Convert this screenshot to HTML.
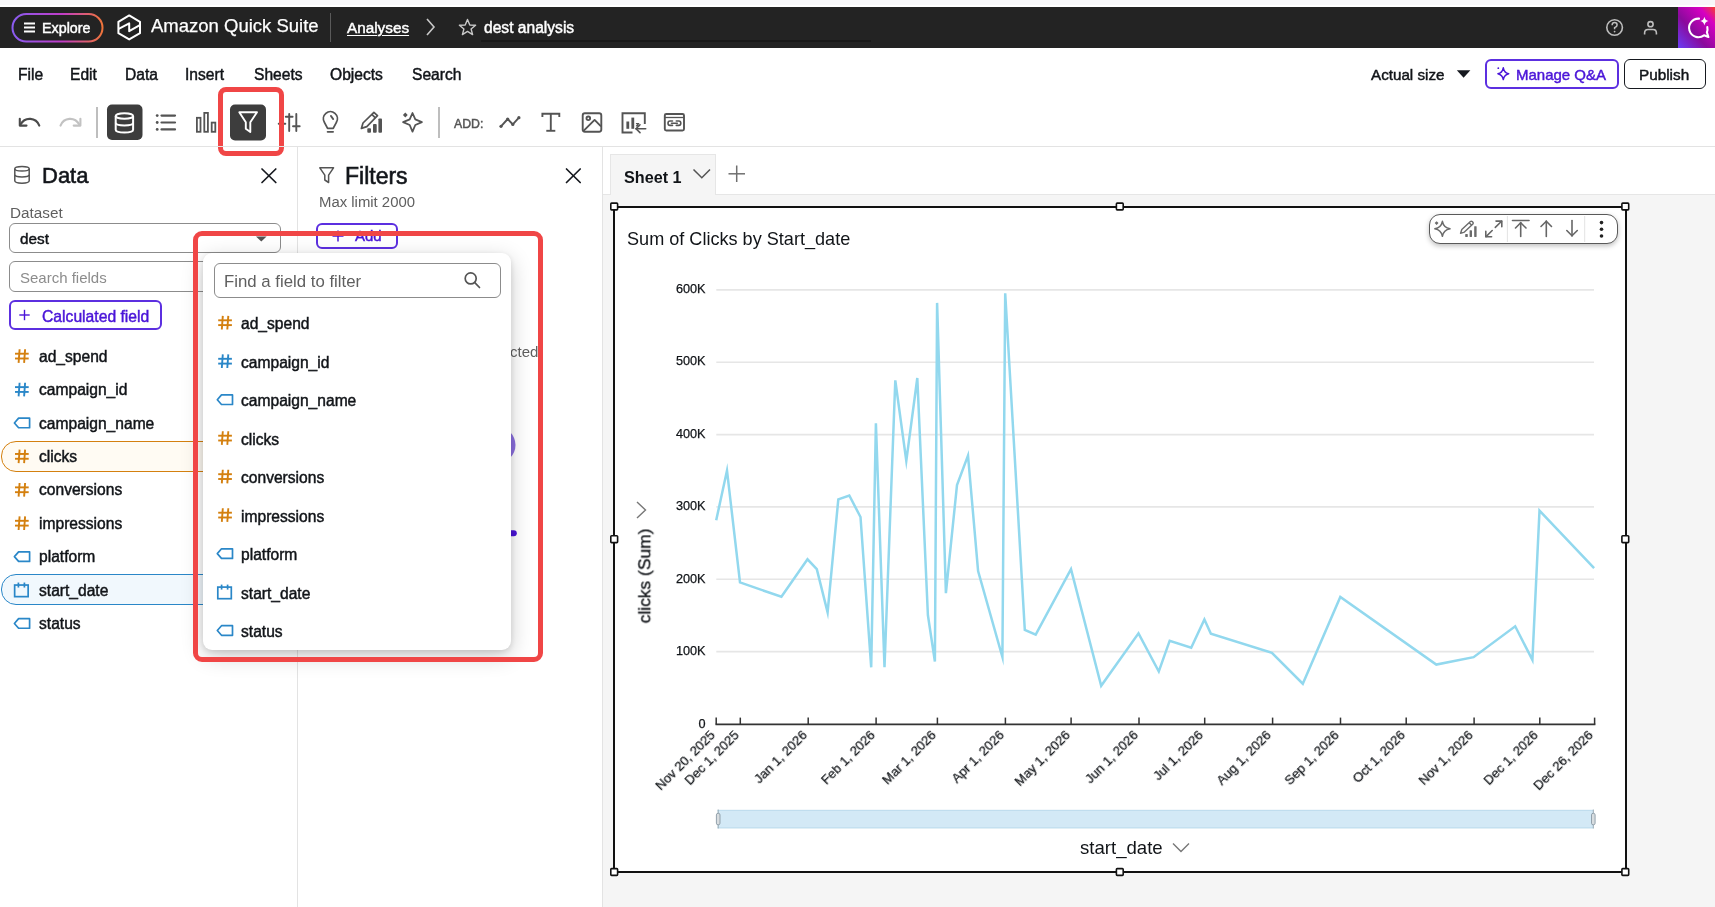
<!DOCTYPE html>
<html><head><meta charset="utf-8">
<style>
*{box-sizing:border-box}
html,body{margin:0;padding:0;width:1715px;height:907px;overflow:hidden;background:#fff;font-family:"Liberation Sans",sans-serif;color:#111418}
.a{position:absolute}
.t{position:absolute;white-space:nowrap;line-height:1;will-change:transform}
.xl{-webkit-text-stroke:0.25px #111418;font-size:13.1px;transform-origin:100% 0;transform:translate(-100%,0) rotate(-45deg)}
.med{-webkit-text-stroke:0.45px currentColor}
svg{position:absolute;overflow:visible}
</style></head><body>
<!-- top strip -->
<div class="a" style="left:0;top:0;width:1715px;height:5px;background:#f8f8fa"></div>
<!-- dark top bar -->
<div class="a" id="topbar" style="left:0;top:7px;width:1715px;height:41px;background:#232323"></div>
<svg style="left:0;top:0" width="1715" height="50">
  <defs>
    <linearGradient id="exg" x1="0" y1="0" x2="1" y2="0">
      <stop offset="0" stop-color="#8a5cf0"/>
      <stop offset="0.55" stop-color="#c03cc8"/>
      <stop offset="1" stop-color="#f0743a"/>
    </linearGradient>
    <linearGradient id="qg" x1="0" y1="1" x2="1" y2="0">
      <stop offset="0" stop-color="#6a3df5"/>
      <stop offset="0.4" stop-color="#8a0a9c"/>
      <stop offset="0.78" stop-color="#d600c2"/>
      <stop offset="1" stop-color="#f5402e"/>
    </linearGradient>
  </defs>
  <rect x="12.5" y="14" width="90" height="27.5" rx="13.75" fill="none" stroke="url(#exg)" stroke-width="2"/>
  <g stroke="#fff" stroke-width="2">
    <line x1="24" y1="23.5" x2="35" y2="23.5"/><line x1="24" y1="27.5" x2="35" y2="27.5"/><line x1="24" y1="31.5" x2="35" y2="31.5"/>
  </g>
  <!-- logo hexagon -->
  <g fill="none" stroke="#fff" stroke-width="2" stroke-linejoin="round">
    <path d="M129.2 15.4 L140 21.8 L140 33.2 L129.2 39.4 L118.4 33.2 L118.4 21.8 Z"/>
    <path d="M118.7 28.9 L129.2 23.4 L129.2 31.2 L139.8 25.1"/>
  </g>
  <line x1="330.5" y1="13" x2="330.5" y2="42" stroke="#5a5a5a" stroke-width="1"/>
  <path d="M427 19 L434 27 L427 35" fill="none" stroke="#c8c8c8" stroke-width="1.6"/>
  <path d="M467.5 19.5 L469.8 25 L475.6 25.3 L471.1 29 L472.6 34.6 L467.5 31.4 L462.4 34.6 L463.9 29 L459.4 25.3 L465.2 25 Z" fill="none" stroke="#c8c8c8" stroke-width="1.4" stroke-linejoin="round"/>
  <line x1="481" y1="41" x2="871" y2="41" stroke="#111" stroke-width="1"/>
  <!-- help -->
  <circle cx="1614.6" cy="27.5" r="7.8" fill="none" stroke="#bdbdbd" stroke-width="1.6"/>
  <path d="M1612.1 25.3 Q1612.1 22.6 1614.6 22.6 Q1617.1 22.6 1617.1 25 Q1617.1 26.6 1614.6 27.6 L1614.6 29.2" fill="none" stroke="#bdbdbd" stroke-width="1.5"/>
  <circle cx="1614.6" cy="31.6" r="0.9" fill="#bdbdbd"/>
  <!-- user -->
  <circle cx="1650.5" cy="24.2" r="2.6" fill="none" stroke="#bdbdbd" stroke-width="1.6"/>
  <path d="M1644.6 34.6 L1644.6 33 Q1644.6 29.5 1648 29.5 L1653 29.5 Q1656.4 29.5 1656.4 33 L1656.4 34.6" fill="none" stroke="#bdbdbd" stroke-width="1.6"/>
  <!-- quick chat gradient -->
  <rect x="1678" y="7" width="37" height="41" fill="url(#qg)"/>
  <path d="M1699 18.6 A9.3 9.3 0 1 0 1704 35.3 L1708.4 37 L1706.9 32.4 A9.3 9.3 0 0 0 1707.3 27" fill="none" stroke="#fff" stroke-width="2.1" stroke-linejoin="round" stroke-linecap="round"/>
  <path d="M1704.4 16.8 Q1705 20.4 1708.6 21.1 Q1705 21.8 1704.4 25.4 Q1703.8 21.8 1700.2 21.1 Q1703.8 20.4 1704.4 16.8 Z" fill="#fff"/>
</svg>
<div class="t med" style="left:41.5px;top:20.5px;font-size:14.3px;color:#fff">Explore</div>
<div class="t" style="left:151px;top:17.3px;font-size:18.5px;color:#fff;-webkit-text-stroke:0.25px #fff">Amazon Quick Suite</div>
<div class="t med" style="left:346.5px;top:20px;font-size:15.3px;color:#fff;text-decoration:underline;text-underline-offset:2px;text-decoration-thickness:1px">Analyses</div>
<div class="t med" style="left:483.5px;top:20px;font-size:15.6px;color:#fff">dest analysis</div>

<!-- menu bar -->
<div class="t med" style="left:17.5px;top:66.5px;font-size:15.6px">File</div>
<div class="t med" style="left:69.7px;top:66.5px;font-size:15.6px">Edit</div>
<div class="t med" style="left:124.5px;top:66.5px;font-size:15.6px">Data</div>
<div class="t med" style="left:185px;top:66.5px;font-size:15.6px">Insert</div>
<div class="t med" style="left:254px;top:66.5px;font-size:15.6px">Sheets</div>
<div class="t med" style="left:330px;top:66.5px;font-size:15.6px">Objects</div>
<div class="t med" style="left:412px;top:66.5px;font-size:15.6px">Search</div>
<div class="t med" style="left:1371.4px;top:66.5px;font-size:15.2px">Actual size</div>
<svg style="left:0;top:0" width="1715" height="100"><path d="M1456.8 70.3 L1470.4 70.3 L1463.6 77.8 Z" fill="#16191f"/></svg>
<div class="a" style="left:1484.5px;top:59px;width:134px;height:29.5px;border:2px solid #5c2fe0;border-radius:6px"></div>
<svg style="left:0;top:0" width="1715" height="100"><path d="M1503.3 67.8 Q1504.2 72.8 1508.7 73.7 Q1504.2 74.6 1503.3 79.6 Q1502.4 74.6 1497.9 73.7 Q1502.4 72.8 1503.3 67.8 Z" fill="none" stroke="#4a14d8" stroke-width="1.5" stroke-linejoin="round"/><circle cx="1498.3" cy="68.2" r="0.9" fill="#4a14d8"/></svg>
<div class="t med" style="left:1516.3px;top:66.5px;font-size:15px;color:#4a14d8">Manage Q&amp;A</div>
<div class="a" style="left:1624px;top:59px;width:82px;height:29.5px;border:1.5px solid #16191f;border-radius:6px"></div>
<div class="t med" style="left:1639.4px;top:66.5px;font-size:15.3px">Publish</div>

<!-- toolbar -->
<svg style="left:0;top:0" width="720" height="146">
<g fill="none" stroke="#4a4a4a" stroke-width="2.1" stroke-linecap="round" stroke-linejoin="round">
  <!-- undo -->
  <path d="M39.3 125.6 C36 117.2 25 116.4 20.5 124.5"/>
  <path d="M19.8 118.7 L19.8 125.6 L26.5 125.6"/>
</g>
<g fill="none" stroke="#c2c2c2" stroke-width="2.1" stroke-linecap="round" stroke-linejoin="round">
  <path d="M60.5 125.6 C63.8 117.2 74.8 116.4 79.3 124.5"/>
  <path d="M80.4 118.7 L80.4 125.6 L73.7 125.6"/>
</g>
<line x1="97" y1="107" x2="97" y2="138" stroke="#a8a8a8" stroke-width="1.5"/>
<line x1="439" y1="107" x2="439" y2="138" stroke="#a8a8a8" stroke-width="1.5"/>
<rect x="107" y="104.5" width="35.5" height="35.5" rx="5" fill="#3d3d3d"/>
<g fill="none" stroke="#fff" stroke-width="2">
  <ellipse cx="124.4" cy="116" rx="8.7" ry="2.8"/>
  <path d="M115.7 116 L115.7 129.7 C115.7 133.4 133.1 133.4 133.1 129.7 L133.1 116"/>
  <path d="M115.7 122.8 C115.7 126.4 133.1 126.4 133.1 122.8"/>
</g>
<g fill="none" stroke="#545454" stroke-width="2.2" stroke-linecap="round">
  <line x1="161.5" y1="115.6" x2="175" y2="115.6"/><line x1="161.5" y1="122.5" x2="175" y2="122.5"/><line x1="161.5" y1="129.4" x2="175" y2="129.4"/>
</g>
<g fill="#545454"><circle cx="157.2" cy="115.6" r="1.4"/><circle cx="157.2" cy="122.5" r="1.4"/><circle cx="157.2" cy="129.4" r="1.4"/></g>
<g fill="none" stroke="#545454" stroke-width="1.8">
  <rect x="196.9" y="117.8" width="3.6" height="14"/>
  <rect x="204.3" y="112.9" width="3.6" height="18.9"/>
  <rect x="211.7" y="122.6" width="3.6" height="9.2"/>
</g>
<rect x="230" y="104.5" width="36" height="36" rx="5" fill="#3d3d3d"/>
<path d="M239.3 112.2 L257 112.2 L250.3 122.3 L250.3 132 L245.8 128.8 L245.8 122.3 Z" fill="none" stroke="#fff" stroke-width="1.9" stroke-linejoin="round"/>
<g fill="none" stroke="#545454" stroke-width="1.9" stroke-linecap="round">
  <line x1="289.2" y1="114" x2="289.2" y2="131"/><line x1="285.8" y1="116.8" x2="292.6" y2="116.8"/>
  <line x1="296.3" y1="114" x2="296.3" y2="131"/><line x1="293" y1="126.3" x2="299.7" y2="126.3"/>
  <line x1="282" y1="114" x2="282" y2="131"/><line x1="278.7" y1="123.7" x2="285.3" y2="123.7"/>
</g>
<g fill="none" stroke="#545454" stroke-width="1.8" stroke-linecap="round" stroke-linejoin="round">
  <path d="M327.6 128.4 L324.4 122.3 A7 7 0 1 1 336.4 122.3 L333.2 128.4 Z"/>
  <line x1="327.6" y1="131.8" x2="333.1" y2="131.8"/>
  <line x1="330.9" y1="115.9" x2="333.2" y2="119.1"/>
</g>
<g fill="none" stroke="#545454" stroke-width="1.7" stroke-linejoin="round">
  <path d="M361.4 128.4 L363 123 L373.9 112.3 L377.5 115.7 L366.8 126.6 Z"/>
  <line x1="371.8" y1="114.4" x2="375.4" y2="117.8"/>
</g>
<g fill="#545454">
  <rect x="367.3" y="128.2" width="3.7" height="4.5" rx="0.9"/>
  <rect x="373" y="124.1" width="3.7" height="8.6" rx="0.9"/>
  <rect x="378.4" y="118.4" width="3.6" height="14.3" rx="0.9"/>
</g>
<path d="M412.5 113 L415.3 119.4 L421.9 122.2 L415.3 125 L412.5 131.6 L409.7 125 L403.1 122.2 L409.7 119.4 Z" fill="none" stroke="#545454" stroke-width="1.8" stroke-linejoin="round"/>
<path d="M405.3 112.6 L407.7 115.1 L405.3 117.6 L402.9 115.1 Z" fill="#545454"/>
<g fill="none" stroke="#545454" stroke-width="1.9" stroke-linecap="round" stroke-linejoin="round">
  <polyline points="501,126.3 507.7,119 512.8,124.4 518.9,117.7"/>
</g>
<g fill="#545454"><circle cx="501" cy="126.3" r="1.6"/><circle cx="507.7" cy="119" r="1.6"/><circle cx="512.8" cy="124.4" r="1.6"/><circle cx="518.9" cy="117.7" r="1.6"/></g>
<g fill="none" stroke="#545454" stroke-width="1.9" stroke-linejoin="miter">
  <path d="M542.4 117 L542.4 113.7 L559.3 113.7 L559.3 117"/>
  <line x1="550.8" y1="113.7" x2="550.8" y2="130.8"/>
  <line x1="546.3" y1="130.8" x2="555.3" y2="130.8"/>
</g>
<g fill="none" stroke="#545454" stroke-width="1.9" stroke-linejoin="round">
  <rect x="582.7" y="113.2" width="18.6" height="18.5" rx="2.2"/>
  <circle cx="588.3" cy="118.3" r="1.8"/>
  <path d="M583.3 131.2 L594.6 119.9 L601 126.3"/>
</g>
<g fill="none" stroke="#545454" stroke-width="1.9">
  <path d="M632.5 132.5 L622.5 132.5 L622.5 113.2 L644.8 113.2 L644.8 124"/>
</g>
<g fill="#545454"><rect x="626.4" y="121.5" width="2.8" height="7.3"/><rect x="631.4" y="117.6" width="2.8" height="11.2"/></g>
<g fill="none" stroke="#545454" stroke-width="1.6" stroke-linecap="round" stroke-linejoin="round">
  <line x1="636" y1="128.7" x2="645.7" y2="128.7"/>
  <polyline points="640,124.8 636,128.7 640,132.6"/>
  <path d="M636.4 123.6 L638.8 123.6 L636.4 126 L638.8 126" stroke-width="1.1"/>
</g>
<g fill="none" stroke="#545454" stroke-width="1.9">
  <rect x="664.8" y="114" width="19.2" height="16.5" rx="1.5"/>
  <line x1="664.8" y1="117.5" x2="684" y2="117.5" stroke-width="1.3"/>
</g>
<g fill="none" stroke="#545454" stroke-width="1.6" stroke-linecap="round">
  <path d="M672.5 121 L670 121 Q668 121 668 123.2 Q668 125.4 670 125.4 L672.5 125.4"/>
  <path d="M676.3 121 L678.8 121 Q680.8 121 680.8 123.2 Q680.8 125.4 678.8 125.4 L676.3 125.4"/>
  <line x1="671.5" y1="123.2" x2="677.3" y2="123.2"/>
</g>
</svg>
<div class="t med" style="left:454px;top:117.5px;font-size:12.3px;color:#545454">ADD:</div>
<!-- red highlight toolbar -->
<div class="a" style="left:217.5px;top:87px;width:66.5px;height:69px;border:5px solid #f04646;border-radius:8px"></div>


<!-- separators -->
<div class="a" style="left:0;top:146px;width:1715px;height:1px;background:#e3e3e3"></div>
<div class="a" style="left:297px;top:147px;width:1px;height:760px;background:#e3e3e3"></div>
<div class="a" style="left:602px;top:147px;width:1px;height:760px;background:#e3e3e3"></div>

<!-- sheet area -->
<div class="a" style="left:603px;top:195px;width:1112px;height:712px;background:#f5f5f5"></div>
<div class="a" style="left:603px;top:194px;width:1112px;height:1px;background:#e6e6e6"></div>
<div class="a" style="left:610px;top:154px;width:106px;height:41px;background:#f5f5f5;border:1px solid #e6e6e6;border-bottom:none"></div>

<!-- DATA PANEL -->
<svg style="left:0;top:0" width="300" height="700">
  <g fill="none" stroke="#545454" stroke-width="1.5">
    <ellipse cx="22" cy="168.8" rx="7.2" ry="2.3"/>
    <path d="M14.8 168.8 L14.8 180.8 C14.8 183.9 29.2 183.9 29.2 180.8 L29.2 168.8"/>
    <path d="M14.8 174.8 C14.8 177.6 29.2 177.6 29.2 174.8"/>
  </g>
  <g stroke="#16191f" stroke-width="1.7" stroke-linecap="round"><line x1="262" y1="169" x2="275.8" y2="182.5"/><line x1="275.8" y1="169" x2="262" y2="182.5"/></g>
</svg>
<div class="t" style="left:41.5px;top:164.8px;font-size:22px;-webkit-text-stroke:0.6px #16191f">Data</div>
<div class="t" style="left:9.8px;top:204.5px;font-size:15.3px;color:#5f5f5f">Dataset</div>
<div class="a" style="left:9px;top:222.5px;width:272px;height:30.5px;border:1.5px solid #8c8c8c;border-radius:6px"></div>
<svg style="left:0;top:0" width="300" height="300"><path d="M256 236.5 L266.6 236.5 L261.3 241.5 Z" fill="#545454"/></svg>
<div class="t med" style="left:19.7px;top:230.5px;font-size:15.3px">dest</div>
<div class="a" style="left:9px;top:261px;width:272px;height:30.5px;border:1.5px solid #8c8c8c;border-radius:6px"></div>
<div class="t" style="left:19.8px;top:269.5px;font-size:15px;color:#8c8c8c">Search fields</div>
<div class="a" style="left:9px;top:299.5px;width:153px;height:30.5px;border:2px solid #5c2fe0;border-radius:6px"></div>
<svg style="left:0;top:0" width="300" height="340"><g stroke="#4a14d8" stroke-width="1.4"><line x1="19.3" y1="315" x2="29.7" y2="315"/><line x1="24.5" y1="309.8" x2="24.5" y2="320.2"/></g></svg>
<div class="t med" style="left:41.7px;top:308.5px;font-size:14.6px;color:#4a14d8;-webkit-text-stroke:0.45px #4a14d8;font-size:15.7px">Calculated field</div>
<div class="a" style="left:0.5px;top:441px;width:320px;height:30.5px;border:1.8px solid #d4800f;border-radius:15px;background:#fffbf3"></div>
<div class="a" style="left:0.5px;top:574.3px;width:320px;height:30.5px;border:1.8px solid #2a87c8;border-radius:15px;background:#f1f8fd"></div>

<div class="t med" style="left:38.7px;top:348.7px;font-size:15.6px">ad_spend</div>
<div class="t med" style="left:38.7px;top:382.1px;font-size:15.6px">campaign_id</div>
<div class="t med" style="left:38.7px;top:415.5px;font-size:15.6px">campaign_name</div>
<div class="t med" style="left:38.7px;top:449.0px;font-size:15.6px">clicks</div>
<div class="t med" style="left:38.7px;top:482.4px;font-size:15.6px">conversions</div>
<div class="t med" style="left:38.7px;top:515.8px;font-size:15.6px">impressions</div>
<div class="t med" style="left:38.7px;top:549.2px;font-size:15.6px">platform</div>
<div class="t med" style="left:38.7px;top:582.6px;font-size:15.6px">start_date</div>
<div class="t med" style="left:38.7px;top:616.1px;font-size:15.6px">status</div>
<svg style="left:0;top:0" width="300" height="700">
<g stroke="#d4800f" stroke-width="1.9" fill="none"><line x1="19.6" y1="349.3" x2="18.6" y2="362.90000000000003"/><line x1="25.1" y1="349.3" x2="24.1" y2="362.90000000000003"/><line x1="15" y1="353.7" x2="28.7" y2="353.7"/><line x1="15" y1="358.5" x2="28.7" y2="358.5"/></g>
<g stroke="#2a87c8" stroke-width="1.9" fill="none"><line x1="19.6" y1="382.72" x2="18.6" y2="396.32000000000005"/><line x1="25.1" y1="382.72" x2="24.1" y2="396.32000000000005"/><line x1="15" y1="387.12" x2="28.7" y2="387.12"/><line x1="15" y1="391.92" x2="28.7" y2="391.92"/></g>
<path d="M14.4 422.94000000000005 L18.6 418.14000000000004 L29.6 418.14000000000004 L29.6 427.74 L18.6 427.74 Z" fill="none" stroke="#2a87c8" stroke-width="1.7" stroke-linejoin="round"/>
<g stroke="#d4800f" stroke-width="1.9" fill="none"><line x1="19.6" y1="449.56" x2="18.6" y2="463.16"/><line x1="25.1" y1="449.56" x2="24.1" y2="463.16"/><line x1="15" y1="453.96" x2="28.7" y2="453.96"/><line x1="15" y1="458.76" x2="28.7" y2="458.76"/></g>
<g stroke="#d4800f" stroke-width="1.9" fill="none"><line x1="19.6" y1="482.98" x2="18.6" y2="496.58000000000004"/><line x1="25.1" y1="482.98" x2="24.1" y2="496.58000000000004"/><line x1="15" y1="487.38" x2="28.7" y2="487.38"/><line x1="15" y1="492.18" x2="28.7" y2="492.18"/></g>
<g stroke="#d4800f" stroke-width="1.9" fill="none"><line x1="19.6" y1="516.4000000000001" x2="18.6" y2="530.0000000000001"/><line x1="25.1" y1="516.4000000000001" x2="24.1" y2="530.0000000000001"/><line x1="15" y1="520.8000000000001" x2="28.7" y2="520.8000000000001"/><line x1="15" y1="525.6000000000001" x2="28.7" y2="525.6000000000001"/></g>
<path d="M14.4 556.62 L18.6 551.8199999999999 L29.6 551.8199999999999 L29.6 561.42 L18.6 561.42 Z" fill="none" stroke="#2a87c8" stroke-width="1.7" stroke-linejoin="round"/>
<g fill="none" stroke="#2a87c8" stroke-width="1.7"><rect x="14.65" y="585.04" width="13.5" height="11.6"/><line x1="18.4" y1="582.54" x2="18.4" y2="587.54"/><line x1="24.4" y1="582.54" x2="24.4" y2="587.54"/></g>
<path d="M14.4 623.46 L18.6 618.66 L29.6 618.66 L29.6 628.26 L18.6 628.26 Z" fill="none" stroke="#2a87c8" stroke-width="1.7" stroke-linejoin="round"/>
</svg>
<!-- FILTERS PANEL -->
<svg style="left:0;top:0" width="610" height="700">
  <path d="M319.8 167.8 L333.5 167.8 L328.6 175.2 L328.6 182.5 L324.8 180 L324.8 175.2 Z" fill="none" stroke="#545454" stroke-width="1.5" stroke-linejoin="round"/>
  <g stroke="#16191f" stroke-width="1.7" stroke-linecap="round"><line x1="566.5" y1="169" x2="580.2" y2="182.5"/><line x1="580.2" y1="169" x2="566.5" y2="182.5"/></g>
  <g stroke="#4a14d8" stroke-width="1.5"><line x1="332.5" y1="236" x2="343.5" y2="236"/><line x1="338" y1="230.5" x2="338" y2="241.5"/></g>
  <circle cx="497" cy="445" r="18.5" fill="#8b6fe0"/>
  <rect x="505" y="530.3" width="11.8" height="6" rx="3" fill="#4a14d8"/>
</svg>
<div class="t" style="left:345.3px;top:164.5px;font-size:23px;-webkit-text-stroke:0.6px #16191f">Filters</div>
<div class="t" style="left:319px;top:194.8px;font-size:14.9px;color:#5f5f5f">Max limit 2000</div>
<div class="a" style="left:316.3px;top:223.3px;width:82px;height:25.5px;border:2px solid #5c2fe0;border-radius:6px"></div>
<div class="t med" style="left:355px;top:228px;font-size:15px;color:#4a14d8">Add</div>
<div class="t" style="left:509.5px;top:343.5px;font-size:15px;color:#5f5f5f">cted</div>

<!-- POPUP -->
<div class="a" style="left:203px;top:252.8px;width:308px;height:397px;background:#fff;border-radius:9px;box-shadow:0 2px 6px rgba(0,0,0,0.12),0 6px 22px rgba(0,0,0,0.2)"></div>
<div class="a" style="left:213.5px;top:262.5px;width:287.5px;height:35.5px;border:1.5px solid #8c8c8c;border-radius:6px"></div>
<div class="t" style="left:224.3px;top:273.6px;font-size:16.8px;color:#5f5f5f">Find a field to filter</div>
<svg style="left:0;top:0" width="610" height="700">
  <g fill="none" stroke="#545454" stroke-width="1.7" stroke-linecap="round"><circle cx="470.7" cy="278.4" r="5.5"/><line x1="474.8" y1="282.6" x2="479.5" y2="287.5"/></g>
<g stroke="#d4800f" stroke-width="1.9" fill="none"><line x1="222.8" y1="315.9" x2="221.8" y2="329.5"/><line x1="228.3" y1="315.9" x2="227.3" y2="329.5"/><line x1="218.2" y1="320.3" x2="231.9" y2="320.3"/><line x1="218.2" y1="325.1" x2="231.9" y2="325.1"/></g><g stroke="#2a87c8" stroke-width="1.9" fill="none"><line x1="222.8" y1="354.4" x2="221.8" y2="368.0"/><line x1="228.3" y1="354.4" x2="227.3" y2="368.0"/><line x1="218.2" y1="358.8" x2="231.9" y2="358.8"/><line x1="218.2" y1="363.6" x2="231.9" y2="363.6"/></g><path d="M217.3 399.7 L221.5 394.9 L232.5 394.9 L232.5 404.5 L221.5 404.5 Z" fill="none" stroke="#2a87c8" stroke-width="1.7" stroke-linejoin="round"/><g stroke="#d4800f" stroke-width="1.9" fill="none"><line x1="222.8" y1="431.3" x2="221.8" y2="444.9"/><line x1="228.3" y1="431.3" x2="227.3" y2="444.9"/><line x1="218.2" y1="435.7" x2="231.9" y2="435.7"/><line x1="218.2" y1="440.5" x2="231.9" y2="440.5"/></g><g stroke="#d4800f" stroke-width="1.9" fill="none"><line x1="222.8" y1="469.8" x2="221.8" y2="483.4"/><line x1="228.3" y1="469.8" x2="227.3" y2="483.4"/><line x1="218.2" y1="474.2" x2="231.9" y2="474.2"/><line x1="218.2" y1="479.0" x2="231.9" y2="479.0"/></g><g stroke="#d4800f" stroke-width="1.9" fill="none"><line x1="222.8" y1="508.3" x2="221.8" y2="521.9"/><line x1="228.3" y1="508.3" x2="227.3" y2="521.9"/><line x1="218.2" y1="512.7" x2="231.9" y2="512.7"/><line x1="218.2" y1="517.5" x2="231.9" y2="517.5"/></g><path d="M217.3 553.6 L221.5 548.8 L232.5 548.8 L232.5 558.4 L221.5 558.4 Z" fill="none" stroke="#2a87c8" stroke-width="1.7" stroke-linejoin="round"/><g fill="none" stroke="#2a87c8" stroke-width="1.7"><rect x="217.8" y="587.1" width="13.5" height="11.6"/><line x1="221.6" y1="584.6" x2="221.6" y2="589.6"/><line x1="227.6" y1="584.6" x2="227.6" y2="589.6"/></g><path d="M217.3 630.5 L221.5 625.7 L232.5 625.7 L232.5 635.3 L221.5 635.3 Z" fill="none" stroke="#2a87c8" stroke-width="1.7" stroke-linejoin="round"/></svg>
<div class="t med" style="left:240.5px;top:316.1px;font-size:15.6px">ad_spend</div>
<div class="t med" style="left:240.5px;top:354.6px;font-size:15.6px">campaign_id</div>
<div class="t med" style="left:240.5px;top:393.1px;font-size:15.6px">campaign_name</div>
<div class="t med" style="left:240.5px;top:431.5px;font-size:15.6px">clicks</div>
<div class="t med" style="left:240.5px;top:470.0px;font-size:15.6px">conversions</div>
<div class="t med" style="left:240.5px;top:508.5px;font-size:15.6px">impressions</div>
<div class="t med" style="left:240.5px;top:547.0px;font-size:15.6px">platform</div>
<div class="t med" style="left:240.5px;top:585.5px;font-size:15.6px">start_date</div>
<div class="t med" style="left:240.5px;top:623.9px;font-size:15.6px">status</div>
<div class="a" style="left:193px;top:231px;width:349.5px;height:430.5px;border:5px solid #f04646;border-radius:9px"></div>
<!-- chart visual -->
<div class="a" style="left:613px;top:205.5px;width:1013.5px;height:667.5px;background:#fff;border:2.7px solid #111"></div>

<!-- SHEET TAB -->
<div class="t" style="left:623.8px;top:168.5px;font-size:16.2px;font-weight:bold">Sheet 1</div>
<svg style="left:0;top:0" width="1715" height="907">
<path d="M693.5 169.5 L701.8 177.8 L710 169.5" fill="none" stroke="#545454" stroke-width="1.5"/>
<g stroke="#6f6f6f" stroke-width="1.5"><line x1="728.5" y1="173.8" x2="745" y2="173.8"/><line x1="736.7" y1="165.5" x2="736.7" y2="182"/></g>
</svg>
<!-- CHART -->
<svg style="left:0;top:0" width="1715" height="907">
<line x1="716.3" y1="651.61" x2="1594" y2="651.61" stroke="#e6e6e6" stroke-width="1.7"/>
<line x1="716.3" y1="579.27" x2="1594" y2="579.27" stroke="#e6e6e6" stroke-width="1.7"/>
<line x1="716.3" y1="506.93" x2="1594" y2="506.93" stroke="#e6e6e6" stroke-width="1.7"/>
<line x1="716.3" y1="434.59" x2="1594" y2="434.59" stroke="#e6e6e6" stroke-width="1.7"/>
<line x1="716.3" y1="362.25" x2="1594" y2="362.25" stroke="#e6e6e6" stroke-width="1.7"/>
<line x1="716.3" y1="289.91" x2="1594" y2="289.91" stroke="#e6e6e6" stroke-width="1.7"/>
<polyline points="716.2,520.3 727.0,470.6 740.0,582.4 781.4,596.8 807.5,559.3 816.8,569.1 827.6,612.4 838.3,499.3 849.3,495.5 860.5,517 871.2,667.3 875.9,423.3 884.5,667.3 895.3,380.3 906.3,460.8 917.3,378 927.9,615.2 934.9,661.5 937.1,302.9 945.9,593.1 957,485 968,455.5 978.1,571 1002.4,657 1005.2,293.3 1024.8,629.8 1035.7,634.7 1071,569.2 1101.2,685.8 1138.5,633.3 1158.8,671.5 1169.7,640.7 1191.2,647.7 1204.4,619.4 1210.9,633.7 1271.9,652.8 1302.8,683.7 1340.3,596.9 1436.3,664.6 1473.6,657.2 1515.2,626.3 1532.4,659.9 1539.5,510.6 1594.1,568.1" fill="none" stroke="#92d8ee" stroke-width="2.5" stroke-linejoin="miter" stroke-miterlimit="10"/>
<line x1="715.5" y1="724.4" x2="1595.4" y2="724.4" stroke="#333" stroke-width="1.6"/>
<line x1="716.2" y1="717.6" x2="716.2" y2="724.4" stroke="#333" stroke-width="1.5"/>
<line x1="740.3" y1="717.6" x2="740.3" y2="724.4" stroke="#333" stroke-width="1.5"/>
<line x1="808.2" y1="717.6" x2="808.2" y2="724.4" stroke="#333" stroke-width="1.5"/>
<line x1="876.1" y1="717.6" x2="876.1" y2="724.4" stroke="#333" stroke-width="1.5"/>
<line x1="937.4" y1="717.6" x2="937.4" y2="724.4" stroke="#333" stroke-width="1.5"/>
<line x1="1005.4" y1="717.6" x2="1005.4" y2="724.4" stroke="#333" stroke-width="1.5"/>
<line x1="1071.1" y1="717.6" x2="1071.1" y2="724.4" stroke="#333" stroke-width="1.5"/>
<line x1="1139.0" y1="717.6" x2="1139.0" y2="724.4" stroke="#333" stroke-width="1.5"/>
<line x1="1204.7" y1="717.6" x2="1204.7" y2="724.4" stroke="#333" stroke-width="1.5"/>
<line x1="1272.6" y1="717.6" x2="1272.6" y2="724.4" stroke="#333" stroke-width="1.5"/>
<line x1="1340.5" y1="717.6" x2="1340.5" y2="724.4" stroke="#333" stroke-width="1.5"/>
<line x1="1406.2" y1="717.6" x2="1406.2" y2="724.4" stroke="#333" stroke-width="1.5"/>
<line x1="1474.1" y1="717.6" x2="1474.1" y2="724.4" stroke="#333" stroke-width="1.5"/>
<line x1="1539.8" y1="717.6" x2="1539.8" y2="724.4" stroke="#333" stroke-width="1.5"/>
<line x1="1594.6" y1="717.6" x2="1594.6" y2="724.4" stroke="#333" stroke-width="1.5"/>
<rect x="717.5" y="810" width="876" height="18.2" fill="#d3e9f6"/>
<line x1="717.5" y1="810.3" x2="1593.5" y2="810.3" stroke="#b5d6ea" stroke-width="0.8"/>
<line x1="717.5" y1="827.9" x2="1593.5" y2="827.9" stroke="#b5d6ea" stroke-width="0.8"/>
<line x1="718.2" y1="809.5" x2="718.2" y2="828.5" stroke="#8a9aa5" stroke-width="0.8"/>
<rect x="716.4" y="813.3" width="3.6" height="11.5" rx="1.6" fill="#d8dde0" stroke="#8a9aa5" stroke-width="0.9"/>
<line x1="1593.3" y1="809.5" x2="1593.3" y2="828.5" stroke="#8a9aa5" stroke-width="0.8"/>
<rect x="1591.5" y="813.3" width="3.6" height="11.5" rx="1.6" fill="#d8dde0" stroke="#8a9aa5" stroke-width="0.9"/>
<path d="M637 502 L645.5 510 L637 518" fill="none" stroke="#777" stroke-width="1.4"/>
<path d="M1173 843.5 L1181 851.5 L1189 843.5" fill="none" stroke="#777" stroke-width="1.4"/>
</svg>
<div class="t" style="left:626.5px;top:230px;font-size:18.1px">Sum of Clicks by Start_date</div>
<div class="t" style="left:600px;width:105.6px;text-align:right;-webkit-text-stroke:0.25px #111418;top:717.6px;font-size:12.7px">0</div>
<div class="t" style="left:600px;width:105.6px;text-align:right;-webkit-text-stroke:0.25px #111418;top:645.2px;font-size:12.7px">100K</div>
<div class="t" style="left:600px;width:105.6px;text-align:right;-webkit-text-stroke:0.25px #111418;top:572.7px;font-size:12.7px">200K</div>
<div class="t" style="left:600px;width:105.6px;text-align:right;-webkit-text-stroke:0.25px #111418;top:500.2px;font-size:12.7px">300K</div>
<div class="t" style="left:600px;width:105.6px;text-align:right;-webkit-text-stroke:0.25px #111418;top:427.7px;font-size:12.7px">400K</div>
<div class="t" style="left:600px;width:105.6px;text-align:right;-webkit-text-stroke:0.25px #111418;top:355.2px;font-size:12.7px">500K</div>
<div class="t" style="left:600px;width:105.6px;text-align:right;-webkit-text-stroke:0.25px #111418;top:282.8px;font-size:12.7px">600K</div>
<div class="t" style="left:644.8px;top:575.5px;font-size:17.4px;-webkit-text-stroke:0.3px #111418;transform:translate(-50%,-50%) rotate(-90deg)">clicks (Sum)</div>
<div class="t xl" style="left:707.8px;top:728.3px">Nov 20, 2025</div>
<div class="t xl" style="left:731.9px;top:728.3px">Dec 1, 2025</div>
<div class="t xl" style="left:799.8px;top:728.3px">Jan 1, 2026</div>
<div class="t xl" style="left:867.7px;top:728.3px">Feb 1, 2026</div>
<div class="t xl" style="left:929.0px;top:728.3px">Mar 1, 2026</div>
<div class="t xl" style="left:997.0px;top:728.3px">Apr 1, 2026</div>
<div class="t xl" style="left:1062.7px;top:728.3px">May 1, 2026</div>
<div class="t xl" style="left:1130.6px;top:728.3px">Jun 1, 2026</div>
<div class="t xl" style="left:1196.3px;top:728.3px">Jul 1, 2026</div>
<div class="t xl" style="left:1264.2px;top:728.3px">Aug 1, 2026</div>
<div class="t xl" style="left:1332.1px;top:728.3px">Sep 1, 2026</div>
<div class="t xl" style="left:1397.8px;top:728.3px">Oct 1, 2026</div>
<div class="t xl" style="left:1465.7px;top:728.3px">Nov 1, 2026</div>
<div class="t xl" style="left:1531.4px;top:728.3px">Dec 1, 2026</div>
<div class="t xl" style="left:1586.2px;top:728.3px">Dec 26, 2026</div>
<div class="t" style="left:1079.6px;top:838.5px;font-size:18.6px">start_date</div>
<div class="a" style="left:1428.5px;top:213.7px;width:189.5px;height:30.3px;background:#fff;border:1.8px solid #5a5a5a;border-radius:11px;box-shadow:0 2px 5px rgba(0,0,0,0.25)"></div>
<svg style="left:0;top:0" width="1715" height="907">
<g stroke="#e3e3e3" stroke-width="1"><line x1="1507.4" y1="216" x2="1507.4" y2="242"/><line x1="1584.7" y1="216" x2="1584.7" y2="242"/></g>
<path d="M1442.4 221.3 Q1443.6 227.6 1450 228.8 Q1443.6 230 1442.4 236.3 Q1441.2 230 1434.8 228.8 Q1441.2 227.6 1442.4 221.3 Z" fill="none" stroke="#6b6b6b" stroke-width="1.5" stroke-linejoin="round"/>
<path d="M1436.6 221.2 L1438.5 223.1 L1436.6 225 L1434.7 223.1 Z" fill="#6b6b6b"/>
<g fill="none" stroke="#6b6b6b" stroke-width="1.4" stroke-linejoin="round"><path d="M1460.5 233.4 L1461.8 229.6 L1470.4 221.6 Q1471.3 220.8 1472.2 221.6 L1472.9 222.3 Q1473.7 223.2 1472.9 224.1 L1464.4 232.1 Z"/><line x1="1469.2" y1="222.8" x2="1471.7" y2="225.3"/></g>
<g fill="#6b6b6b"><rect x="1465.2" y="234.1" width="2.6" height="2.8" rx="0.4"/><rect x="1469.6" y="230.3" width="2.4" height="6.6" rx="0.4"/><rect x="1474.2" y="226.2" width="2.4" height="10.7" rx="0.4"/></g>
<g fill="none" stroke="#666" stroke-width="1.6" stroke-linecap="round" stroke-linejoin="round">
<line x1="1495.3" y1="227.4" x2="1501.6" y2="221.2"/><polyline points="1496,221.1 1501.8,221.1 1501.8,226.8"/><line x1="1492.2" y1="230.5" x2="1486" y2="236.6"/><polyline points="1485.8,231.2 1485.8,236.8 1491.6,236.8"/>
<line x1="1512.5" y1="220.5" x2="1529" y2="220.5"/><line x1="1520.7" y1="222.5" x2="1520.7" y2="236.5"/><polyline points="1515.5,228 1520.7,222.8 1526,228"/>
<line x1="1546.3" y1="221" x2="1546.3" y2="236.5"/><polyline points="1541,226.5 1546.3,221.2 1551.5,226.5"/>
<line x1="1572" y1="220.5" x2="1572" y2="236"/><polyline points="1566.8,230.5 1572,235.8 1577.3,230.5"/>
</g>
<g fill="#222"><circle cx="1601.5" cy="222.6" r="1.8"/><circle cx="1601.5" cy="229.3" r="1.8"/><circle cx="1601.5" cy="236" r="1.8"/></g>
</svg>
<svg style="left:0;top:0" width="1715" height="907"><rect x="610.8" y="203.1" width="6.8" height="6.8" rx="0.8" fill="#fff" stroke="#111" stroke-width="1.6"/><rect x="1116.4" y="203.1" width="6.8" height="6.8" rx="0.8" fill="#fff" stroke="#111" stroke-width="1.6"/><rect x="1621.9" y="203.1" width="6.8" height="6.8" rx="0.8" fill="#fff" stroke="#111" stroke-width="1.6"/><rect x="610.8" y="535.8" width="6.8" height="6.8" rx="0.8" fill="#fff" stroke="#111" stroke-width="1.6"/><rect x="1621.9" y="535.8" width="6.8" height="6.8" rx="0.8" fill="#fff" stroke="#111" stroke-width="1.6"/><rect x="610.8" y="868.6" width="6.8" height="6.8" rx="0.8" fill="#fff" stroke="#111" stroke-width="1.6"/><rect x="1116.4" y="868.6" width="6.8" height="6.8" rx="0.8" fill="#fff" stroke="#111" stroke-width="1.6"/><rect x="1621.9" y="868.6" width="6.8" height="6.8" rx="0.8" fill="#fff" stroke="#111" stroke-width="1.6"/></svg>
</body></html>
